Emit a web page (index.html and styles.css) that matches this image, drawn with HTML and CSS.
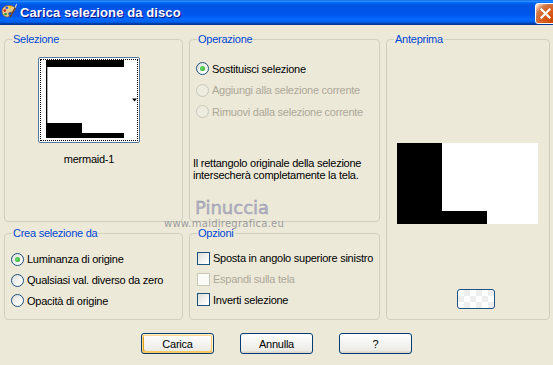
FILE: index.html
```html
<!DOCTYPE html>
<html>
<head>
<meta charset="utf-8">
<link rel="stylesheet" href="styles.css">
</head>
<body>
<div class="window">
  <div class="titlebar">
    <svg class="appicon" width="16" height="16" viewBox="0 0 16 16">
      <path d="M7.5 2.5C3.5 2.5 1 5 1 8.2C1 11.8 3.6 14 6.4 14C8.4 14 8.6 12.4 7.8 11.4C7 10.4 7.6 9.3 9.4 9.3C12.4 9.3 14 8.2 14 6.2C14 3.8 11.4 2.5 7.5 2.5Z" fill="#E9C88E" stroke="#8A5A2A" stroke-width="0.8"/>
      <circle cx="3.8" cy="7.6" r="1.3" fill="#E02020"/>
      <circle cx="5.8" cy="4.8" r="1.3" fill="#2050E0"/>
      <circle cx="9.2" cy="4.3" r="1.3" fill="#F0D000"/>
      <circle cx="4.6" cy="11" r="1.3" fill="#20A040"/>
      <path d="M9.5 13.5L14.5 4" stroke="#7A4A1A" stroke-width="1.6" stroke-linecap="round"/>
      <path d="M14.3 4.2L15.5 1.5" stroke="#C0C0C0" stroke-width="1.4" stroke-linecap="round"/>
    </svg>
    <span class="title">Carica selezione da disco</span>
    <span class="close">
      <svg width="13" height="13" viewBox="0 0 13 13"><path d="M2.5 2.5L10.5 10.5M10.5 2.5L2.5 10.5" stroke="#fff" stroke-width="2.2" stroke-linecap="square"/></svg>
    </span>
  </div>
  <div class="content">
    <div class="groups">
      <fieldset class="group sel">
        <legend>Selezione</legend>
        <div class="thumbwrap">
          <div class="thumb">
            <div class="focus">
              <svg width="96" height="80" viewBox="0 0 96 80">
                <rect x="5" y="0" width="78" height="78" fill="#fff"/>
                <rect x="5" y="0" width="78" height="7" fill="#000"/>
                <rect x="5" y="0" width="1.3" height="78" fill="#000"/>
                <rect x="5" y="63" width="36" height="15" fill="#000"/>
                <rect x="41" y="73" width="42" height="5" fill="#000"/>
                <path d="M91 38.5h5l-2.5 3z" fill="#000"/>
              </svg>
            </div>
          </div>
          <div class="thumbname">mermaid-1</div>
        </div>
      </fieldset>
      <fieldset class="group op">
        <legend>Operazione</legend>
        <div class="opts">
          <div class="opt"><span class="radio on"></span><span>Sostituisci selezione</span></div>
          <div class="opt dis"><span class="radio"></span><span>Aggiungi alla selezione corrente</span></div>
          <div class="opt dis"><span class="radio"></span><span>Rimuovi dalla selezione corrente</span></div>
        </div>
        <p class="desc">Il rettangolo originale della selezione<br>intersecherà completamente la tela.</p>
      </fieldset>
      <fieldset class="group prev">
        <legend>Anteprima</legend>
        <svg class="previmg" width="141" height="81" viewBox="0 0 141 81">
          <rect width="141" height="81" fill="#fff"/>
          <rect width="45" height="81" fill="#000"/>
          <rect x="45" y="68" width="45" height="13" fill="#000"/>
        </svg>
        <span class="zoombtn"></span>
      </fieldset>
      <fieldset class="group crea">
        <legend>Crea selezione da</legend>
        <div class="opts2">
          <div class="opt"><span class="radio on"></span><span>Luminanza di origine</span></div>
          <div class="opt"><span class="radio"></span><span>Qualsiasi val. diverso da zero</span></div>
          <div class="opt"><span class="radio"></span><span>Opacità di origine</span></div>
        </div>
      </fieldset>
      <fieldset class="group opz">
        <legend>Opzioni</legend>
        <div class="opts3">
          <div class="opt"><span class="check"></span><span>Sposta in angolo superiore sinistro</span></div>
          <div class="opt dis"><span class="check"></span><span>Espandi sulla tela</span></div>
          <div class="opt"><span class="check"></span><span>Inverti selezione</span></div>
        </div>
      </fieldset>
    </div>
    <div class="buttons">
      <span class="btn default">Carica</span>
      <span class="btn">Annulla</span>
      <span class="btn">?</span>
    </div>
  </div>
  <div class="wm-name">Pinuccia</div>
  <div class="wm-url">www.maidiregrafica.eu</div>
</div>
</body>
</html>
```

FILE: styles.css
```css
html, body {
  margin: 0;
  padding: 0;
}
body {
  width: 553px;
  height: 365px;
  overflow: hidden;
  background: #ECE9D8;
  font-family: "Liberation Sans", Arial, sans-serif;
  font-size: 11px;
  letter-spacing: -0.25px;
  color: #000;
}
.window {
  position: relative;
  width: 553px;
  height: 365px;
  overflow: hidden;
}
.titlebar {
  height: 25px;
  display: flex;
  align-items: center;
  background: linear-gradient(to bottom, #0058ee 0%, #3593ff 4%, #288eff 6%, #127dff 8%, #036ffc 10%, #0262ee 14%, #0057e5 20%, #0054e3 24%, #0055eb 56%, #005bf5 66%, #026afe 76%, #0062ef 86%, #0052d6 92%, #0040ab 94%, #003092 100%);
}
.appicon {
  margin-left: 1px;
  margin-top: -3px;
  flex: none;
}
.title {
  margin-left: 3px;
  flex: 1;
  color: #fff;
  font-weight: bold;
  font-size: 13px;
  letter-spacing: 0.1px;
  text-shadow: 1px 1px #0F1089;
}
.close {
  flex: none;
  box-sizing: border-box;
  width: 21px;
  height: 21px;
  margin-right: -3px;
  margin-top: 2px;
  border: 1px solid #fff;
  border-radius: 3px;
  display: flex;
  align-items: center;
  justify-content: center;
  background: radial-gradient(circle at 90% 90%, #CC4600 0%, #DC6527 55%, #CD7546 70%, #FFCCB2 90%, #fff 100%);
}
.content {
  padding: 8px 4px 0 4px;
}
.groups {
  display: grid;
  grid-template-columns: 179px 191px 164px;
  grid-template-rows: 189px 93px;
  column-gap: 6px;
  row-gap: 5px;
}
.group {
  margin: 0;
  padding: 0;
  min-width: 0;
  border: 1px solid #D0D0BF;
  border-radius: 4px;
  display: flex;
  flex-direction: column;
  align-items: flex-start;
}
.group legend {
  margin-left: 7px;
  padding: 0 1px;
  line-height: 13px;
  color: #0046D5;
}
.sel { grid-column: 1; grid-row: 1; }
.op { grid-column: 2; grid-row: 1; }
.prev { grid-column: 3; grid-row: 1 / span 2; }
.crea { grid-column: 1; grid-row: 2; }
.opz { grid-column: 2; grid-row: 2; }

.thumbwrap {
  margin: 11px 0 0 33px;
  width: 102px;
  display: flex;
  flex-direction: column;
  align-items: center;
}
.thumb {
  box-sizing: border-box;
  width: 102px;
  height: 86px;
  border: 1px solid #55769F;
  border-radius: 2px;
  background: #fff;
  padding: 1px;
}
.focus {
  box-sizing: border-box;
  width: 98px;
  height: 82px;
  border: 1px dotted #000;
  display: flex;
}
.thumbname {
  margin-top: 10px;
  line-height: 13px;
}

.opt {
  display: flex;
  align-items: center;
  gap: 3px;
  white-space: nowrap;
}
.opt.dis {
  color: #ACA899;
}
.opts {
  padding: 12px 0 0 6px;
}
.opts .opt { height: 21.5px; }
.desc {
  margin: 34px 0 0 3px;
  line-height: 12.3px;
}
.opts2 {
  padding: 9px 0 0 6px;
}
.opts2 .opt { height: 20.7px; }
.opts3 {
  padding: 8px 0 0 7px;
}
.opts3 .opt { height: 20.7px; }

.radio {
  box-sizing: border-box;
  flex: none;
  width: 13px;
  height: 13px;
  border: 1px solid #1C5180;
  border-radius: 50%;
  background: linear-gradient(135deg, #DCDCD7 0%, #fff 80%);
  display: inline-flex;
  align-items: center;
  justify-content: center;
}
.radio.on::after {
  content: "";
  width: 5px;
  height: 5px;
  border-radius: 50%;
  background: radial-gradient(circle at 40% 40%, #6BE06A 0%, #21A121 100%);
}
.dis .radio {
  border-color: #CAC8BB;
  background: #EEEBDF;
}
.check {
  box-sizing: border-box;
  flex: none;
  width: 13px;
  height: 13px;
  border: 1px solid #1C5180;
  background: linear-gradient(135deg, #DCDCD7 0%, #fff 85%);
}
.dis .check {
  border-color: #CAC8BB;
  background: #FBFBF8;
}

.previmg {
  display: block;
  margin: 97px 0 0 10px;
}
.zoombtn {
  box-sizing: border-box;
  width: 38px;
  height: 20px;
  margin: 65px 0 0 70px;
  border: 1px solid #1D5281;
  border-radius: 3px;
  background-color: #fff;
  background-image:
    linear-gradient(45deg, #EEEEEE 25%, transparent 25%, transparent 75%, #EEEEEE 75%),
    linear-gradient(45deg, #EEEEEE 25%, transparent 25%, transparent 75%, #EEEEEE 75%);
  background-size: 12px 12px;
  background-position: 0 0, 6px 6px;
}

.buttons {
  margin-top: 13px;
  display: flex;
  justify-content: center;
  gap: 26px;
}
.btn {
  box-sizing: border-box;
  width: 73px;
  height: 21px;
  border: 1px solid #003C74;
  border-radius: 3px;
  background: linear-gradient(180deg, #fff 0%, #ECEBE6 86%, #D6D0C5 100%);
  display: flex;
  align-items: center;
  justify-content: center;
}
.btn.default {
  box-shadow: inset -1px 1px #FFF0CF, inset 1px 2px #FDD889, inset -2px -2px #FBC761, inset 2px -2px #E5A01A;
}

.wm-name {
  position: absolute;
  left: 195px;
  top: 199px;
  font-family: "DejaVu Sans", sans-serif;
  font-size: 18px;
  line-height: 18px;
  letter-spacing: 0;
  color: #B4B4C6;
  -webkit-text-stroke: 0.4px #8F8FA3;
}
.wm-url {
  position: absolute;
  left: 164px;
  top: 218px;
  font-family: "DejaVu Sans", sans-serif;
  font-size: 10px;
  line-height: 12px;
  letter-spacing: 0.25px;
  color: rgba(118, 118, 130, 0.7);
}
```
